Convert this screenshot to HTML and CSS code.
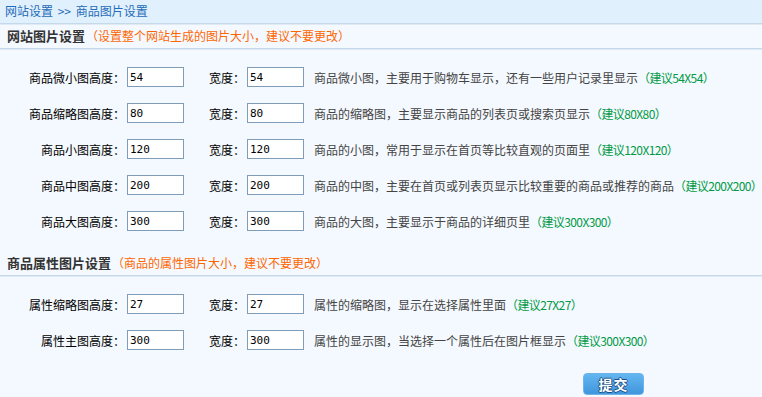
FILE: index.html
```html
<!DOCTYPE html>
<html lang="zh-CN">
<head>
  <meta charset="UTF-8" />
  <title>商品图片设置</title>
  <link rel="stylesheet" href="styles.css">
</head>
<body>

  <div class="crumb">网站设置 <span class="sep">&gt;&gt;</span> 商品图片设置</div>

  <div class="section-title">
    <b>网站图片设置</b><span class="note">（设置整个网站生成的图片大小，建议不要更改）</span>
  </div>

  <div class="rows">
    <div class="row">
      <label class="lbl">商品微小图高度：</label><input class="box" type="text" value="54">
      <label class="lbl2">宽度：</label><input class="box" type="text" value="54">
      <span class="desc">商品微小图，主要用于购物车显示，还有一些用户记录里显示<span class="tip">（建议54X54）</span></span>
    </div>
    <div class="row">
      <label class="lbl">商品缩略图高度：</label><input class="box" type="text" value="80">
      <label class="lbl2">宽度：</label><input class="box" type="text" value="80">
      <span class="desc">商品的缩略图，主要显示商品的列表页或搜索页显示<span class="tip">（建议80X80）</span></span>
    </div>
    <div class="row">
      <label class="lbl">商品小图高度：</label><input class="box" type="text" value="120">
      <label class="lbl2">宽度：</label><input class="box" type="text" value="120">
      <span class="desc">商品的小图，常用于显示在首页等比较直观的页面里<span class="tip">（建议120X120）</span></span>
    </div>
    <div class="row">
      <label class="lbl">商品中图高度：</label><input class="box" type="text" value="200">
      <label class="lbl2">宽度：</label><input class="box" type="text" value="200">
      <span class="desc">商品的中图，主要在首页或列表页显示比较重要的商品或推荐的商品<span class="tip">（建议200X200）</span></span>
    </div>
    <div class="row">
      <label class="lbl">商品大图高度：</label><input class="box" type="text" value="300">
      <label class="lbl2">宽度：</label><input class="box" type="text" value="300">
      <span class="desc">商品的大图，主要显示于商品的详细页里<span class="tip">（建议300X300）</span></span>
    </div>
  </div>

  <div class="section-title second">
    <b>商品属性图片设置</b><span class="note">（商品的属性图片大小，建议不要更改）</span>
  </div>

  <div class="rows">
    <div class="row">
      <label class="lbl">属性缩略图高度：</label><input class="box" type="text" value="27">
      <label class="lbl2">宽度：</label><input class="box" type="text" value="27">
      <span class="desc">属性的缩略图，显示在选择属性里面<span class="tip">（建议27X27）</span></span>
    </div>
    <div class="row">
      <label class="lbl">属性主图高度：</label><input class="box" type="text" value="300">
      <label class="lbl2">宽度：</label><input class="box" type="text" value="300">
      <span class="desc">属性的显示图，当选择一个属性后在图片框显示<span class="tip">（建议300X300）</span></span>
    </div>
  </div>

  <div class="actions">
    <button class="submit-btn" type="button">提交</button>
  </div>

</body>
</html>
```

FILE: styles.css
```css
* { margin: 0; padding: 0; box-sizing: border-box; }

body {
  font-family: "Noto Sans CJK SC", "DejaVu Sans", sans-serif;
  font-size: 12px;
  background-color: #f4f9ff;
  color: #000;
  overflow: hidden;
}

.crumb {
  height: 24px;
  line-height: 21px;
  padding-left: 5px;
  background-color: #e1f0fd;
  border-bottom: 1px solid #c6d9ea;
  box-shadow: 0 1px 0 #dfeaf4;
  color: #1f6cb8;
}

.crumb .sep {
  margin: 0 2px;
}

.section-title {
  height: 25px;
  line-height: 23px;
  padding-left: 7px;
  border-bottom: 1px solid #c6d9ea;
  box-shadow: 0 1px 0 #dfeaf4;
}

.section-title b {
  font-size: 13px;
  color: #333;
}

.section-title .note {
  color: #ff6600;
  margin-left: 1px;
}

.section-title.second {
  margin-top: 12px;
}

.rows {
  padding-top: 10px;
}

.row {
  display: flex;
  align-items: center;
  height: 36px;
}

.lbl, .lbl2, .box {
  flex-shrink: 0;
}

.lbl {
  width: 127px;
  padding-right: 2px;
  text-align: right;
}

.lbl2 {
  width: 63px;
  padding-right: 2px;
  text-align: right;
}

.box {
  width: 57px;
  height: 20px;
  border: 1px solid #7f9db9;
  background: #fff;
  padding: 0 2px;
  font-family: "DejaVu Sans Mono", monospace;
  font-size: 11px;
  color: #000;
}

.desc {
  margin-left: 10px;
  color: #444;
  white-space: nowrap;
}

.tip {
  color: #009944;
  letter-spacing: -0.6px;
}

.actions {
  padding: 15px 0 0 583px;
}

.submit-btn {
  width: 61px;
  height: 22px;
  border: 1px solid #6fb3e8;
  border-radius: 4px;
  background: linear-gradient(#64b6f1, #3f96dc);
  color: #fff;
  font-family: "Noto Sans CJK SC", sans-serif;
  font-size: 14px;
  font-weight: bold;
  line-height: 18px;
  letter-spacing: 1px;
  text-shadow: -1px 0 #1d4f86, 1px 0 #1d4f86, 0 -1px #1d4f86, 0 1px #1d4f86;
  cursor: pointer;
}
```
